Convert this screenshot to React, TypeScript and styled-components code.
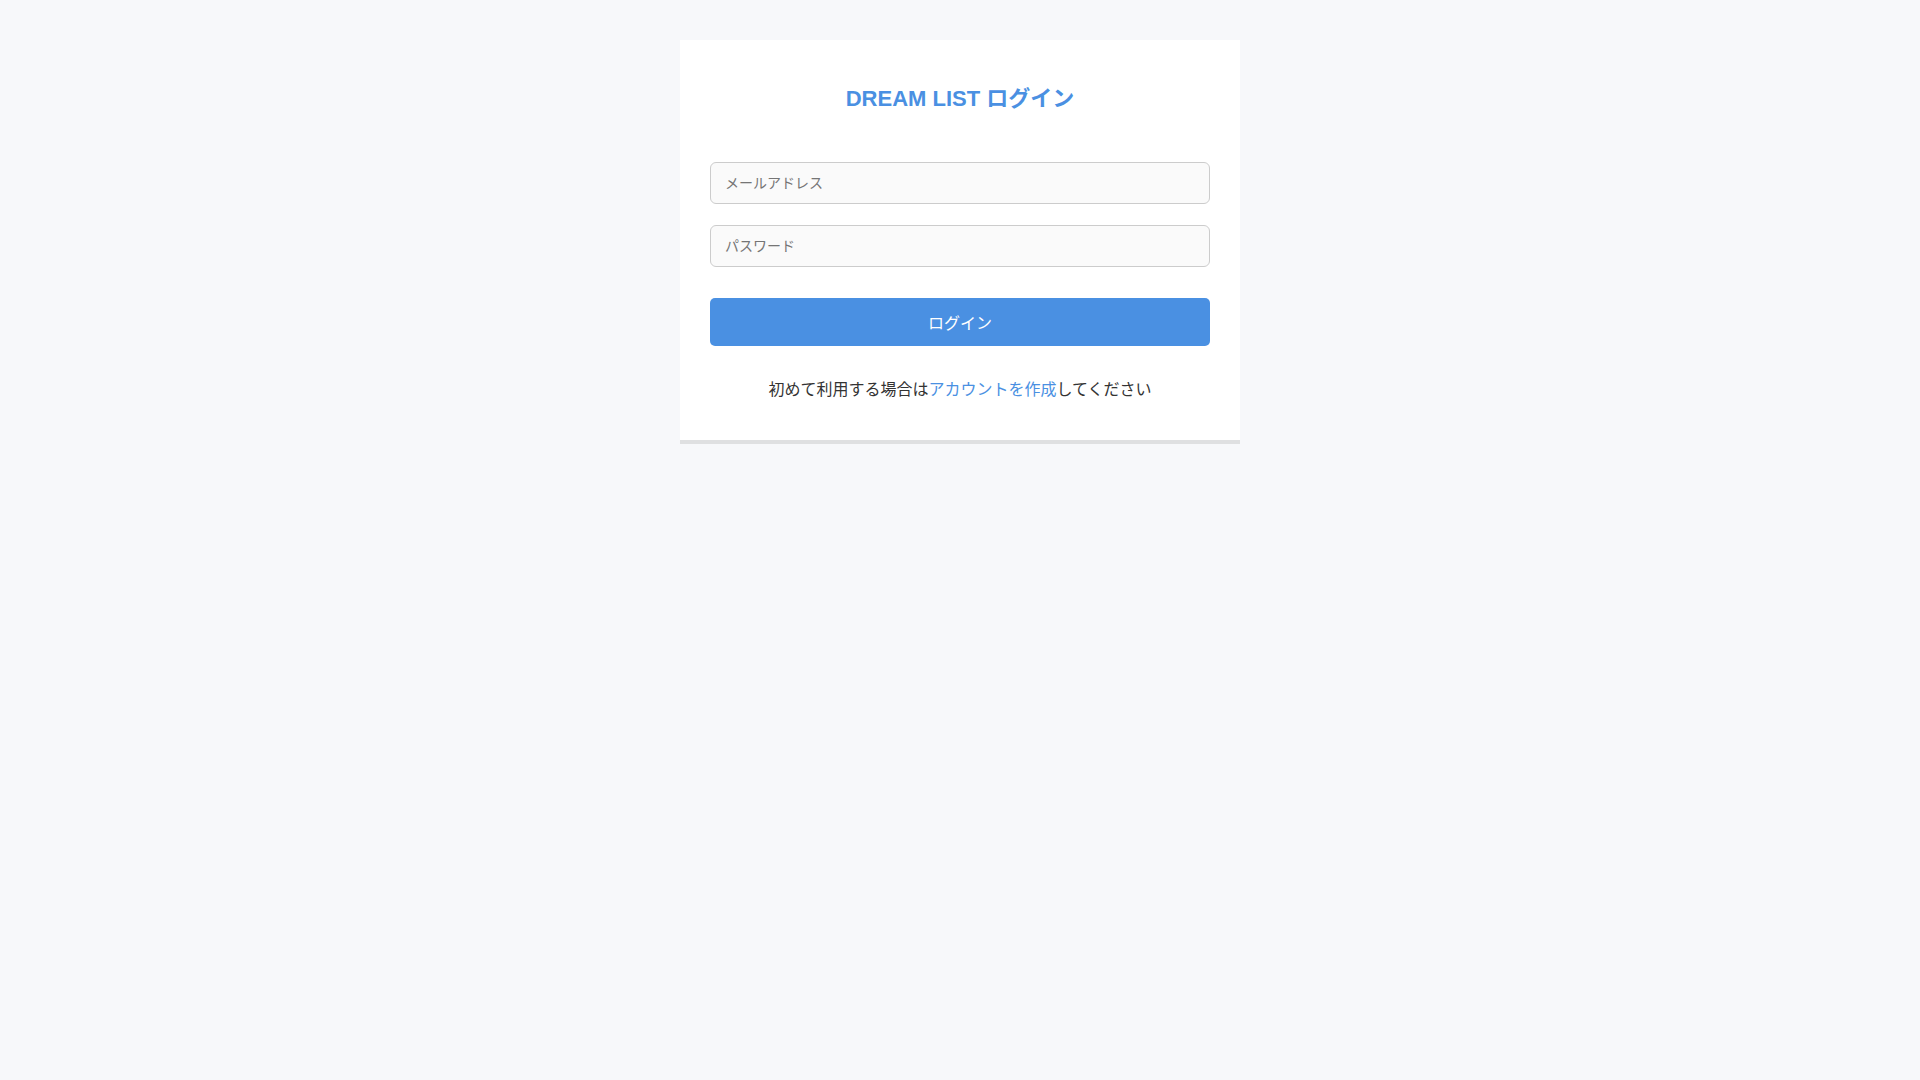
import React from "react";
import styled, { createGlobalStyle } from "styled-components";

const GlobalStyle = createGlobalStyle`
  body {
    margin: 0;
    background: #f7f8fa;
    font-family: "Liberation Sans", Arial, "Noto Sans CJK JP", sans-serif;
    color: #333;
  }
`;

export default function App() {
  return (
    <>
      <GlobalStyle />
      <StyledLoginCard>
        <StyledTitle>DREAM LIST ログイン</StyledTitle>
        <StyledForm onSubmit={event => event.preventDefault()}>
          <StyledInput type="email" placeholder="メールアドレス" />
          <StyledInput type="password" placeholder="パスワード" />
          <StyledSubmitButton type="submit">ログイン</StyledSubmitButton>
        </StyledForm>
        <StyledSignUpText>
          初めて利用する場合は<StyledLink href="#">アカウントを作成</StyledLink>してください
        </StyledSignUpText>
      </StyledLoginCard>
    </>
  );
}

const StyledLoginCard = styled.div`
  box-sizing: border-box;
  width: 560px;
  margin: 40px auto 0;
  padding: 41px 30px 38px;
  background: #fff;
  border-bottom: 4px solid #dfe0e1;
`;

const StyledTitle = styled.h2`
  margin: 0 0 45px;
  font-size: 22px;
  line-height: 36px;
  font-weight: 700;
  text-align: center;
  color: #4a90e2;
`;

const StyledForm = styled.form`
  display: flex;
  flex-direction: column;
  gap: 21px;
`;

const StyledInput = styled.input`
  box-sizing: border-box;
  height: 42px;
  padding: 0 14px;
  border: 1px solid #ccc;
  border-radius: 6px;
  background: #fafafa;
  font-family: inherit;
  font-size: 14px;
  color: #333;
  outline: none;

  &::placeholder {
    color: #757575;
  }
`;

const StyledSubmitButton = styled.button`
  height: 48px;
  margin-top: 10px;
  border: none;
  border-radius: 5px;
  background: #4a90e2;
  color: #fff;
  font-family: inherit;
  font-size: 16px;
  cursor: pointer;
`;

const StyledSignUpText = styled.p`
  margin: 32px 0 0;
  font-size: 16px;
  line-height: 24px;
  text-align: center;
`;

const StyledLink = styled.a`
  color: #4a90e2;
  text-decoration: none;
`;
